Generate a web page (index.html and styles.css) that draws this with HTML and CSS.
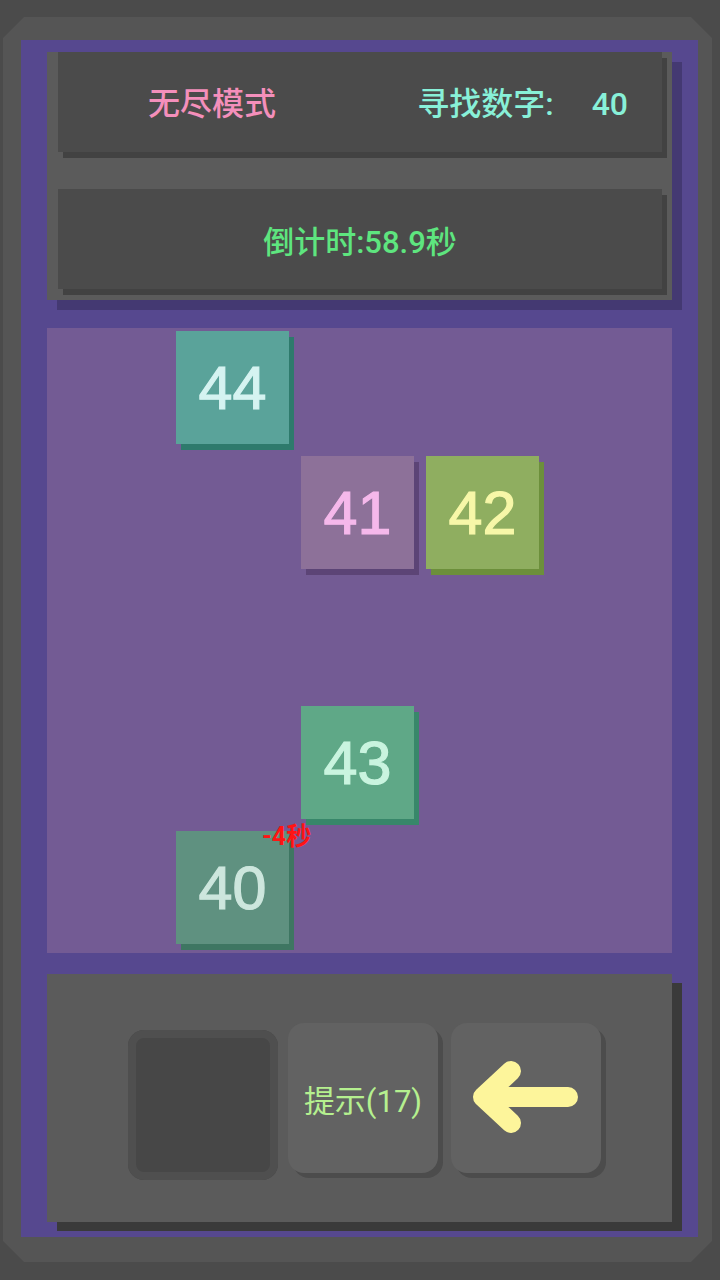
FILE: index.html
```html
<!DOCTYPE html>
<html lang="zh-CN">
<head>
    <meta charset="UTF-8">
    <meta name="viewport" content="width=device-width, initial-scale=1.0">
    <title>找数字 - 无尽模式</title>
    <link rel="stylesheet" href="styles.css">
</head>
<body>
    <div class="frame">
        <div class="game">
            <section class="top-box">
                <div class="panel header-panel">
                    <span class="mode">无尽模式</span>
                    <span class="target">寻找数字:<span class="target-num">40</span></span>
                </div>
                <div class="panel timer-panel">
                    <span class="timer">倒计时:58.9秒</span>
                </div>
            </section>

            <section class="board">
                <div class="tile teal" style="grid-area: 1 / 2;">44</div>
                <div class="tile mauve" style="grid-area: 2 / 3;">41</div>
                <div class="tile olive" style="grid-area: 2 / 4;">42</div>
                <div class="tile green" style="grid-area: 4 / 3;">43</div>
                <div class="tile found" style="grid-area: 5 / 2;">
                    40
                    <span class="penalty">-4秒</span>
                </div>
            </section>

            <section class="bottom-box">
                <div class="slot"></div>
                <button class="btn hint-btn">提示(17)</button>
                <button class="btn back-btn">
                    <svg width="150" height="150" viewBox="0 0 150 150">
                        <path d="M117 74 H34 M60 48 L32 74 L60 100" fill="none" stroke="#fdf59b" stroke-width="20" stroke-linecap="round" stroke-linejoin="round"/>
                    </svg>
                </button>
            </section>
        </div>
    </div>
</body>
</html>
```

FILE: styles.css
```css
:root {
    --page: #4b4b4b;
    --frame: #555555;
    --purple: #56488f;
    --board: #735b94;
    --box: #5b5b5b;
    --panel: #4b4b4b;
}

* {
    margin: 0;
    padding: 0;
    box-sizing: border-box;
    font-family: Roboto, "Noto Sans CJK SC", sans-serif;
}

body {
    background: var(--page);
    width: 720px;
    height: 1280px;
    overflow: hidden;
}

/* outer bevelled frame */
.frame {
    width: 709px;
    height: 1245px;
    margin: 17px 0 0 3px;
    padding: 23px 14px 25px 18px;
    background: var(--frame);
    clip-path: polygon(21px 0, calc(100% - 21px) 0, 100% 21px, 100% calc(100% - 21px),
        calc(100% - 21px) 100%, 21px 100%, 0 calc(100% - 21px), 0 21px);
}

.game {
    height: 100%;
    background: var(--purple);
    padding: 12px 26px 15px;
    display: flex;
    flex-direction: column;
}

/* header + timer */
.top-box {
    height: 248px;
    background: var(--box);
    padding: 0 10px 11px 11px;
    display: flex;
    flex-direction: column;
    gap: 37px;
    box-shadow: 10px 10px 0 rgba(0,0,0,0.2);
}

.panel {
    height: 100px;
    background: var(--panel);
    box-shadow: 5px 6px 0 #424242;
    display: flex;
    align-items: center;
}

.header-panel {
    justify-content: space-between;
    padding: 0 34px 2px 90px;
}

.mode {
    color: #f48fbb;
    font-size: 32px;
    font-weight: 500;
}

.target {
    color: #88f0d8;
    font-size: 32px;
    font-weight: 500;
}

.target-num {
    margin-left: 38px;
}

.timer-panel {
    justify-content: center;
}

.timer {
    color: #5ee57f;
    font-size: 31px;
    font-weight: 500;
}

/* play field: 5x5 cells */
.board {
    margin-top: 28px;
    height: 625px;
    background: var(--board);
    display: grid;
    grid-template-columns: repeat(5, 125px);
    grid-template-rows: repeat(5, 125px);
}

.tile {
    position: relative;
    width: 113px;
    height: 113px;
    margin: 3px 0 0 4px;
    display: flex;
    align-items: center;
    justify-content: center;
    font-family: "Liberation Sans", Arial, sans-serif;
    font-size: 61px;
    -webkit-text-stroke: 1.2px currentColor;
}

.teal { background: #5aa39a; color: #d5f3f1; box-shadow: 5px 6px 0 #2e7a6c; }
.mauve { background: #8d7199; color: #f5b8eb; box-shadow: 5px 6px 0 #5c4476; }
.olive { background: #8fae60; color: #f7f7a8; box-shadow: 5px 6px 0 #6c8f3b; }
.green { background: #5fa887; color: #c9f4df; box-shadow: 5px 6px 0 #38876a; }
.found { background: #5f9180; color: #cde6dd; box-shadow: 5px 6px 0 #3e7662; }

.penalty {
    position: absolute;
    left: 86px;
    top: -7px;
    white-space: nowrap;
    color: #ff1414;
    font-family: Roboto, "Noto Sans CJK SC", sans-serif;
    font-size: 25px;
    font-weight: 700;
    line-height: 1;
    -webkit-text-stroke: 0;
}

/* controls */
.bottom-box {
    margin-top: 21px;
    height: 248px;
    background: var(--box);
    box-shadow: 10px 9px 0 #3a3a3a;
    display: flex;
    align-items: flex-start;
    padding: 49px 0 0 81px;
}

.slot {
    width: 150px;
    height: 150px;
    margin-top: 7px;
    margin-right: 10px;
    border-radius: 16px;
    background: #474747;
    box-shadow: inset 0 0 0 8px #4f4f4f;
}

.btn {
    width: 150px;
    height: 150px;
    border: none;
    border-radius: 16px;
    background: #626262;
    box-shadow: 5px 5px 0 #4c4c4c;
    display: flex;
    align-items: center;
    justify-content: center;
    cursor: pointer;
}

.hint-btn {
    margin-right: 13px;
    color: #b5f08f;
    font-size: 31px;
}

.back-btn svg {
    display: block;
}
```
